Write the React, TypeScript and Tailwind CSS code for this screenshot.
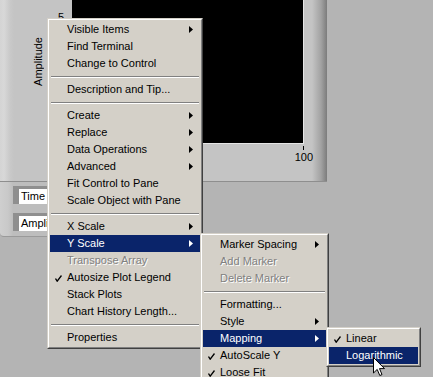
import React from "react";

type MenuItem =
  | "sep"
  | {
      label: string;
      arrow?: boolean;
      check?: boolean;
      disabled?: boolean;
      active?: boolean;
    };

const mainItems: MenuItem[] = [
  { label: "Visible Items", arrow: true },
  { label: "Find Terminal" },
  { label: "Change to Control" },
  "sep",
  { label: "Description and Tip..." },
  "sep",
  { label: "Create", arrow: true },
  { label: "Replace", arrow: true },
  { label: "Data Operations", arrow: true },
  { label: "Advanced", arrow: true },
  { label: "Fit Control to Pane" },
  { label: "Scale Object with Pane" },
  "sep",
  { label: "X Scale", arrow: true },
  { label: "Y Scale", arrow: true, active: true },
  { label: "Transpose Array", disabled: true },
  { label: "Autosize Plot Legend", check: true },
  { label: "Stack Plots" },
  { label: "Chart History Length..." },
  "sep",
  { label: "Properties" },
];

const yScaleItems: MenuItem[] = [
  { label: "Marker Spacing", arrow: true },
  { label: "Add Marker", disabled: true },
  { label: "Delete Marker", disabled: true },
  "sep",
  { label: "Formatting..." },
  { label: "Style", arrow: true },
  { label: "Mapping", arrow: true, active: true },
  { label: "AutoScale Y", check: true },
  { label: "Loose Fit", check: true },
];

const mappingItems: MenuItem[] = [
  { label: "Linear", check: true },
  { label: "Logarithmic", active: true },
];

function Check({ color }: { color: string }) {
  return (
    <svg width="7" height="7" viewBox="0 0 7 7" className="absolute left-[5px] top-[6px]">
      <polyline points="0.5,3.5 2.2,6.2 6.5,0.5" fill="none" stroke={color} strokeWidth="1.3" />
    </svg>
  );
}

function Arrow({ color }: { color: string }) {
  return (
    <svg width="4" height="7" viewBox="0 0 4 7" className="ml-auto shrink-0">
      <polygon points="0,0 4,3.5 0,7" fill={color} />
    </svg>
  );
}

function Menu({ items, className }: { items: MenuItem[]; className: string }) {
  return (
    <div
      className={`absolute border border-t-[#d4d0c8] border-l-[#d4d0c8] border-r-[#404040] border-b-[#404040] bg-[#d4d0c8] ${className}`}
    >
      <div className="border border-t-white border-l-white border-r-[#808080] border-b-[#808080] p-[1px]">
        {items.map((it, i) => {
          if (it === "sep") {
            return (
              <div key={i} className="h-[9px] pt-[4px] px-[1px]">
                <div className="h-[1px] bg-[#808080]" />
                <div className="h-[1px] bg-white" />
              </div>
            );
          }
          const tone = it.active
            ? "bg-[#0a246a] text-white"
            : it.disabled
            ? "text-[#808080] [text-shadow:1px_1px_0_#ffffff]"
            : "text-black";
          return (
            <div
              key={i}
              className={`relative flex h-[17px] items-center pl-[17px] pr-[7px] whitespace-nowrap ${tone}`}
            >
              {it.check && <Check color={it.active ? "#fff" : "#000"} />}
              <span>{it.label}</span>
              {it.arrow && <Arrow color={it.active ? "#fff" : "#000"} />}
            </div>
          );
        })}
      </div>
    </div>
  );
}

export default function App() {
  return (
    <div className="relative w-[433px] h-[377px] overflow-hidden bg-[#b4b4b4] font-['Liberation_Sans',Arial,sans-serif] text-[11px] leading-none">
      {/* chart panel */}
      <div className="flex w-[327px] h-[182px] bg-[#c4c4c4] border-b border-[#8e8e8e]">
        <div className="flex w-[72px] bg-[linear-gradient(to_right,#d4d4d4_0,#d8d8d8_4px,#c9c9c9_10px,#c4c4c4_14px)]">
          <div className="flex w-[44px] items-start justify-end pt-[37px]">
            <span className="[writing-mode:vertical-rl] rotate-180 text-black">Amplitude</span>
          </div>
          <span className="ml-[14px] pt-[12px] text-black">5</span>
        </div>
        <div className="relative z-10 flex w-[232px] flex-col">
          <div className="h-[144px] bg-black border-r border-b border-[#e6e6e6]" />
          <div className="flex flex-col items-end pt-[2px] -mr-[9px]">
            <div className="mr-[9px] h-[4px] w-[1px] bg-black" />
            <span className="mt-[2px] text-black">100</span>
          </div>
        </div>
        <div className="w-[23px] bg-[linear-gradient(to_right,#c4c4c4_0,#c4c4c4_8px,#a2a2a2_17px,#7c7c7c_23px)]" />
      </div>

      {/* legend */}
      <div className="flex w-[100px] h-[55px] flex-col gap-[9px] pl-[13px] pt-[4px] bg-[linear-gradient(to_right,#cfcfcf_0,#c9c9c9_8px,#bdbdbd_13px)] rounded-bl-[4px] border-b border-[#9a9a9a]">
        {["Time", "Amplitude"].map((t) => (
          <div
            key={t}
            className="flex h-[18px] items-center border-t-[3px] border-l-[6px] border-t-[#8f8f8f] border-l-[#8f8f8f] bg-white pl-[2px] text-black"
          >
            {t}
          </div>
        ))}
      </div>

      {/* context menus */}
      <Menu items={mainItems} className="z-20 left-[47px] top-[18px] w-[156px]" />
      <Menu items={yScaleItems} className="z-20 left-[200px] top-[233px] w-[129px]" />
      <Menu items={mappingItems} className="z-20 left-[326px] top-[327px] w-[95px]" />

      {/* mouse cursor */}
      <svg width="12" height="20" viewBox="0 0 12 20" className="absolute z-30 left-[373px] top-[357px]">
        <path
          d="M0.5 0.5 L0.5 16 L4.2 12.4 L6.8 18.5 L9 17.6 L6.5 11.6 L11.5 11.6 Z"
          fill="#fff"
          stroke="#000"
          strokeWidth="1"
        />
      </svg>
    </div>
  );
}
